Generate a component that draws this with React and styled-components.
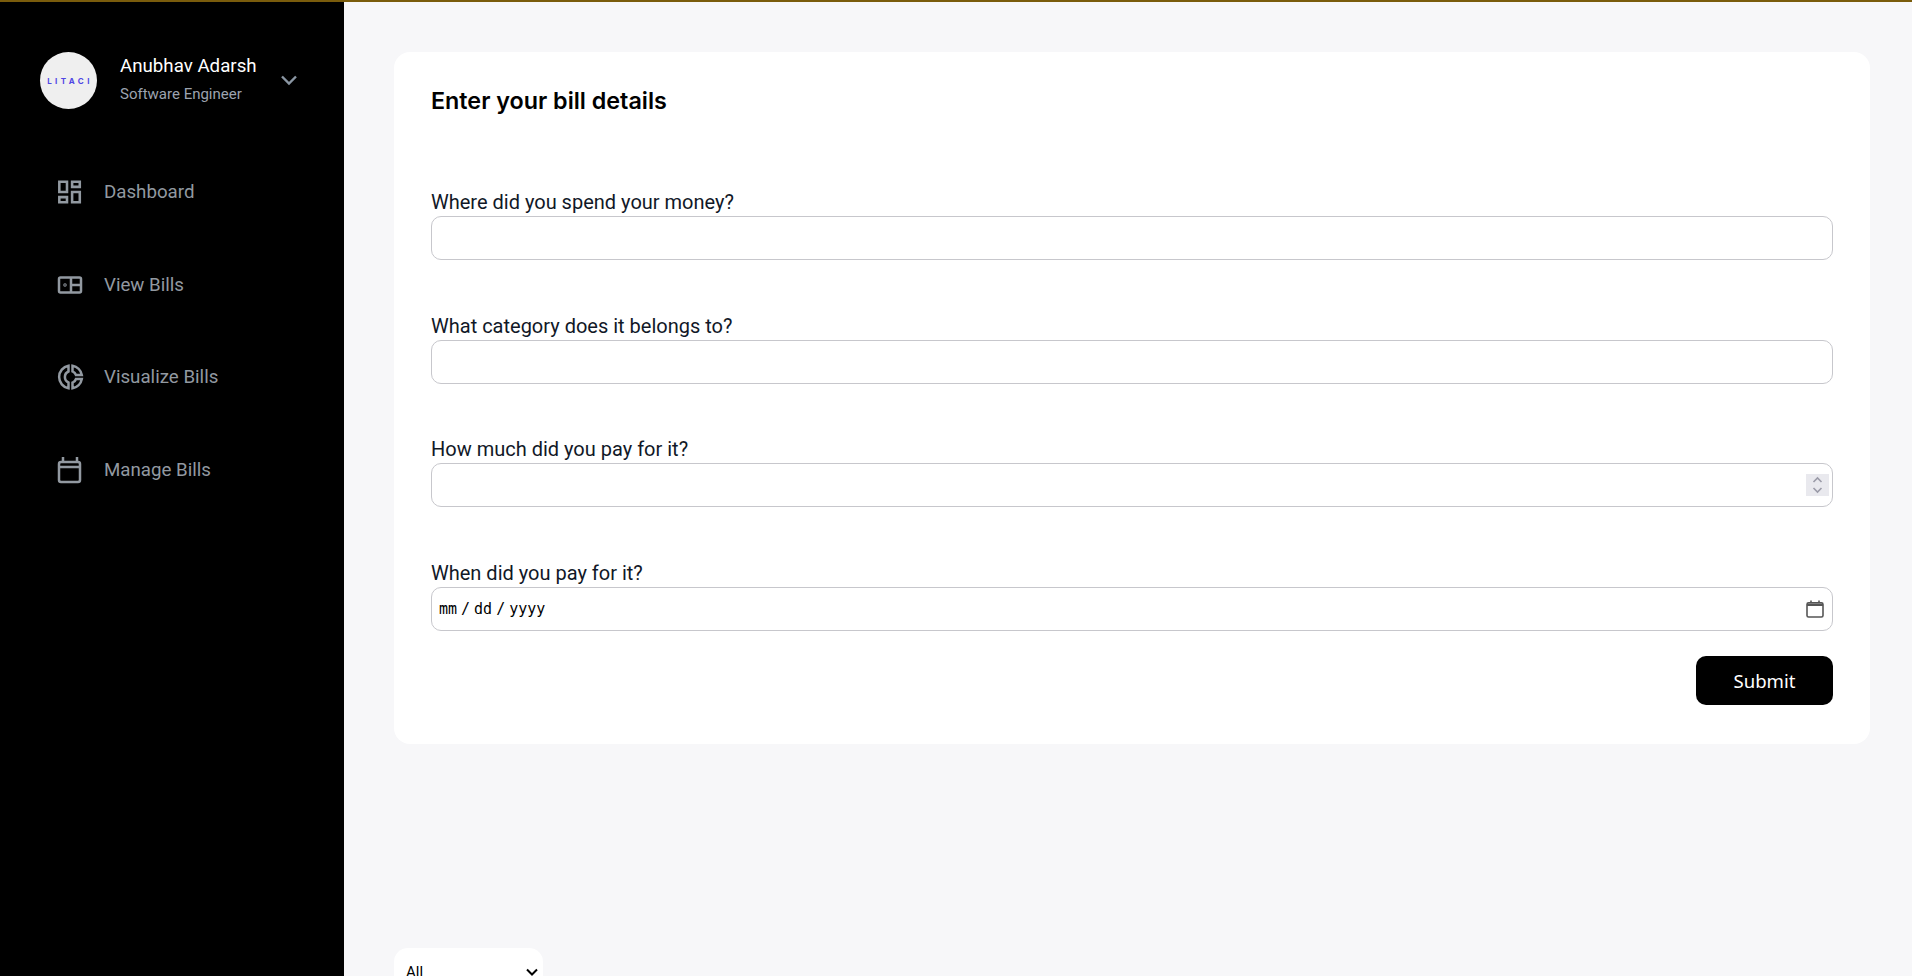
import React from 'react'
import styled, { createGlobalStyle } from 'styled-components'

const spinIcon = encodeURIComponent(
  '<svg xmlns="http://www.w3.org/2000/svg" width="23" height="22" viewBox="0 0 23 22" fill="none" stroke="#9b9ba8" stroke-width="1.6"><path d="M7.5 8l4-4 4 4M7.5 14l4 4 4-4"/></svg>'
)

const calendarIcon = encodeURIComponent(
  '<svg xmlns="http://www.w3.org/2000/svg" width="18" height="18" viewBox="0 0 18 18" fill="none" stroke="#555" stroke-width="1.6"><rect x="1" y="2.8" width="16" height="14.2" rx="1.6"/><path d="M1 5.2h16M1 4.4h16M5 .4v2.4M13 .4v2.4"/></svg>'
)

const GlobalStyle = createGlobalStyle`
  html, body {
    margin: 0;
    height: 100%;
    overflow: hidden;
    background: #f7f7f9;
    font-family: Roboto, "Liberation Sans", sans-serif;
  }
  * {
    box-sizing: border-box;
  }
`

const Page = styled.div`
  display: flex;
  flex-direction: column;
  height: 976px;
  overflow: hidden;
`

const TopLine = styled.div`
  flex: none;
  height: 2px;
  background: #7a5c0c;
`

const Body = styled.div`
  flex: 1;
  display: flex;
  min-height: 0;
`

const Sidebar = styled.aside`
  flex: none;
  width: 344px;
  background: #000;
  padding: 50px 0 0 40px;
`

const Profile = styled.div`
  display: flex;
  align-items: center;
  height: 57px;
`

const Avatar = styled.div`
  flex: none;
  display: flex;
  align-items: center;
  justify-content: center;
  width: 57px;
  height: 57px;
  border-radius: 50%;
  background: #efefef;
  color: #4f46e5;
  font-family: Inter, sans-serif;
  font-size: 8px;
  font-weight: 700;
  letter-spacing: 3.4px;
  padding-left: 3px;
`

const ProfileText = styled.div`
  margin-left: 23px;
  width: 157px;
`

const Name = styled.div`
  color: #fff;
  font-size: 18.72px;
  line-height: 24px;
  margin-top: -5px;
`

const Role = styled.div`
  color: #9ca3af;
  font-size: 15px;
  line-height: 18px;
  margin-top: 7px;
`

const Chevron = styled.svg`
  width: 24px;
  height: 24px;
  margin-top: -2px;
  fill: none;
  stroke: #8a96a3;
  stroke-width: 2.4;
`

const Nav = styled.nav`
  display: flex;
  flex-direction: column;
  gap: 60.5px;
  margin-top: 67px;
  padding-left: 16px;
`

const NavItem = styled.a`
  display: flex;
  align-items: center;
  gap: 20px;
  height: 32px;
  color: #9299a1;
  font-size: 18.72px;
  & > svg {
    flex: none;
    width: 28px;
    height: 28px;
    fill: none;
    stroke: #9299a1;
    stroke-width: 2.5;
  }
`

const Main = styled.main`
  flex: 1;
  padding: 50px 42px 0 50px;
  min-width: 0;
`

const Card = styled.form`
  height: 692px;
  background: #fff;
  border-radius: 16px;
  padding: 33px 37px 0 37px;
`

const Title = styled.h2`
  margin: 0 0 71px;
  color: #000;
  font-family: Inter, sans-serif;
  font-size: 23.3px;
  font-weight: 600;
  line-height: 32px;
`

const Field = styled.label`
  display: block;
  margin-bottom: 51.6px;
  color: #111827;
  font-size: 20px;
  line-height: 28px;
`

const Input = styled.input`
  display: block;
  width: 100%;
  height: 44px;
  padding: 0 3px 0 6px;
  background: #fff;
  border: 1px solid #c7c7cc;
  border-radius: 10px;
  outline: none;
  color: #000;
  font-size: 16px;
  font-family: Roboto, sans-serif;
  &::-webkit-inner-spin-button {
    appearance: none;
    opacity: 1;
    width: 23px;
    height: 22px;
    background: #e9e9ee url("data:image/svg+xml,${spinIcon}") center no-repeat;
  }
  &::-webkit-datetime-edit-fields-wrapper {
    font-family: "DejaVu Sans Mono", monospace;
    font-size: 15px;
  }
  &::-webkit-datetime-edit-text {
    font-family: Roboto, sans-serif;
    font-size: 16px;
    padding: 0 3px;
  }
  &::-webkit-calendar-picker-indicator {
    width: 18px;
    height: 18px;
    padding: 0;
    margin-right: 5px;
    background: url("data:image/svg+xml,${calendarIcon}") center no-repeat;
  }
`

const Actions = styled.div`
  display: flex;
  justify-content: flex-end;
  margin-top: -26.6px;
`

const Submit = styled.button`
  width: 137px;
  height: 49px;
  background: #000;
  color: #fff;
  border: none;
  border-radius: 10px;
  font-family: "Noto Sans", sans-serif;
  font-size: 18.6px;
`

const Filter = styled.div`
  display: flex;
  align-items: center;
  justify-content: space-between;
  width: 149px;
  height: 48px;
  margin-top: 204px;
  padding: 0 1px 0 12px;
  background: #fff;
  border-radius: 14px;
  color: #000;
  font-size: 15px;
  & > svg {
    width: 20px;
    height: 20px;
    fill: none;
    stroke: #000;
    stroke-width: 2.4;
  }
`

const navItems = [
  {
    label: 'Dashboard',
    icon: (
      <svg viewBox="1.4 1.05 21.9 21.9" style={{ stroke: 'none', fill: '#9299a1' }}>
        <path d="M19 5v2h-4V5h4M9 5v6H5V5h4m10 8v6h-4v-6h4M9 17v2H5v-2h4M21 3h-8v6h8V3zM11 3H3v10h8V3zm10 8h-8v10h8V11zm-10 4H3v6h8v-6z" />
      </svg>
    ),
  },
  {
    label: 'View Bills',
    icon: (
      <svg viewBox="0 0 28 28">
        <rect x="3" y="6.5" width="22" height="15" rx="1.5" />
        <path d="M15 6.5v15M15 14h10" />
        <circle cx="9" cy="14" r="0.5" />
      </svg>
    ),
  },
  {
    label: 'Visualize Bills',
    icon: (
      <svg viewBox="0 0 28 28">
        <path d="M12.5 2.7A11.5 11.5 0 0 0 12.5 25.3V19.5A6 6 0 0 1 12.5 8.5Z" />
        <path d="M16.5 2.7A11.5 11.5 0 0 1 25.8 12H20A6 6 0 0 0 16.5 8.3Z" />
        <path d="M16.5 25.3A11.5 11.5 0 0 0 25.8 16H20A6 6 0 0 1 16.5 19.7Z" />
      </svg>
    ),
  },
  {
    label: 'Manage Bills',
    icon: (
      <svg viewBox="0 0 28 28">
        <rect x="3" y="6" width="21" height="20" rx="2" />
        <path d="M3 11h21M7 1v5M21 1v5" />
      </svg>
    ),
  },
]

const fields = [
  { label: 'Where did you spend your money?', type: 'text' },
  { label: 'What category does it belongs to?', type: 'text' },
  { label: 'How much did you pay for it?', type: 'number' },
  { label: 'When did you pay for it?', type: 'date' },
]

const App = () => {
  return (
    <Page>
      <GlobalStyle />
      <TopLine />
      <Body>
        <Sidebar>
          <Profile>
            <Avatar>LITACI</Avatar>
            <ProfileText>
              <Name>Anubhav Adarsh</Name>
              <Role>Software Engineer</Role>
            </ProfileText>
            <Chevron viewBox="0 0 24 24">
              <path d="M5 8.5l7 7 7-7" />
            </Chevron>
          </Profile>
          <Nav>
            {navItems.map((item) => (
              <NavItem key={item.label}>
                {item.icon}
                {item.label}
              </NavItem>
            ))}
          </Nav>
        </Sidebar>
        <Main>
          <Card>
            <Title>Enter your bill details</Title>
            {fields.map((field) => (
              <Field key={field.label}>
                {field.label}
                <Input type={field.type} />
              </Field>
            ))}
            <Actions>
              <Submit type="button">Submit</Submit>
            </Actions>
          </Card>
          <Filter>
            All
            <svg viewBox="0 0 24 24">
              <path d="M6 9l6 6 6-6" />
            </svg>
          </Filter>
        </Main>
      </Body>
    </Page>
  )
}

export default App
